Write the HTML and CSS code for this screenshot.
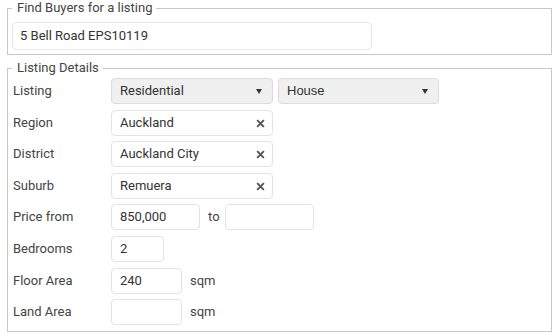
FILE: index.html
```html
<!DOCTYPE html>
<html>
<head>
<meta charset="utf-8">
<link rel="stylesheet" href="styles.css">
</head>
<body>
<div class="page">
  <fieldset class="box box-find">
    <legend class="legend">Find Buyers for a listing</legend>
    <div class="search">5 Bell Road EPS10119</div>
  </fieldset>
  <fieldset class="box box-details">
    <legend class="legend">Listing Details</legend>
    <div class="rows">
      <div class="row">
        <div class="label">Listing</div>
        <div class="field select w162">Residential<span class="caret"></span></div>
        <div class="field select w161 arial">House<span class="caret"></span></div>
      </div>
      <div class="row">
        <div class="label">Region</div>
        <div class="field input w162">Auckland<svg class="clear" viewBox="0 0 8 8"><path d="M1 1L7 7M7 1L1 7"/></svg></div>
      </div>
      <div class="row">
        <div class="label">District</div>
        <div class="field input w162">Auckland City<svg class="clear" viewBox="0 0 8 8"><path d="M1 1L7 7M7 1L1 7"/></svg></div>
      </div>
      <div class="row">
        <div class="label">Suburb</div>
        <div class="field input w162">Remuera<svg class="clear" viewBox="0 0 8 8"><path d="M1 1L7 7M7 1L1 7"/></svg></div>
      </div>
      <div class="row">
        <div class="label">Price from</div>
        <div class="field input w89">850,000</div>
        <div class="unit to">to</div>
        <div class="field input w89"></div>
      </div>
      <div class="row">
        <div class="label">Bedrooms</div>
        <div class="field input w53">2</div>
      </div>
      <div class="row">
        <div class="label">Floor Area</div>
        <div class="field input w71">240</div>
        <div class="unit">sqm</div>
      </div>
      <div class="row">
        <div class="label">Land Area</div>
        <div class="field input w71"></div>
        <div class="unit">sqm</div>
      </div>
    </div>
  </fieldset>
</div>
</body>
</html>
```
FILE: styles.css
```css
html, body {
  margin: 0;
  padding: 0;
  background: #fff;
}
body {
  font-family: Roboto, "Liberation Sans", sans-serif;
  font-size: 13px;
  color: #444;
}
.page {
  padding: 0 4px 0 7px;
  width: 545px;
}
.box {
  margin: 0;
  border: 1px solid #c8c8c8;
  padding: 6px 4px 4px 4px;
  min-width: 0;
}
.box-details {
  margin-top: 5px;
  padding: 2px 4px 6px 5px;
}
.legend {
  padding: 0 4px 0 5px;
  line-height: 16px;
  color: #444;
}
.box-details .legend {
  margin-left: -1px;
}
.search {
  box-sizing: border-box;
  width: 360px;
  height: 28px;
  border: 1px solid #e6e6e6;
  border-radius: 4px;
  padding: 0 7px;
  line-height: 26px;
  color: #333;
}
.rows {
  display: flex;
  flex-direction: column;
  gap: 5.6px;
}
.row {
  display: flex;
  align-items: flex-start;
  height: 26px;
}
.label {
  width: 98px;
  flex: none;
  padding-top: 5px;
  line-height: 16px;
}
.field {
  box-sizing: border-box;
  height: 26px;
  border: 1px solid #e3e3e3;
  border-radius: 4px;
  padding: 0 8px;
  line-height: 24px;
  color: #333;
  position: relative;
  flex: none;
}
.select {
  background: #f0f0f0;
  border-color: #dcdcdc;
  margin-right: 5px;
}
.arial {
  font-family: "Liberation Sans", Arial, sans-serif;
}
.w162 { width: 162px; }
.w161 { width: 161px; }
.w89 { width: 89px; }
.w53 { width: 53px; }
.w71 { width: 71px; }
.caret {
  position: absolute;
  right: 10px;
  top: 10px;
  width: 0;
  height: 0;
  border-left: 3.5px solid transparent;
  border-right: 3.5px solid transparent;
  border-top: 5px solid #333;
}
.clear {
  position: absolute;
  right: 7px;
  top: 8px;
  width: 9px;
  height: 9px;
  stroke: #555;
  stroke-width: 1.7;
  fill: none;
}
.unit {
  line-height: 26px;
  padding-left: 8px;
  color: #444;
}
.to {
  padding: 0 8px 0 8px;
  width: 25px;
  box-sizing: border-box;
}
```
